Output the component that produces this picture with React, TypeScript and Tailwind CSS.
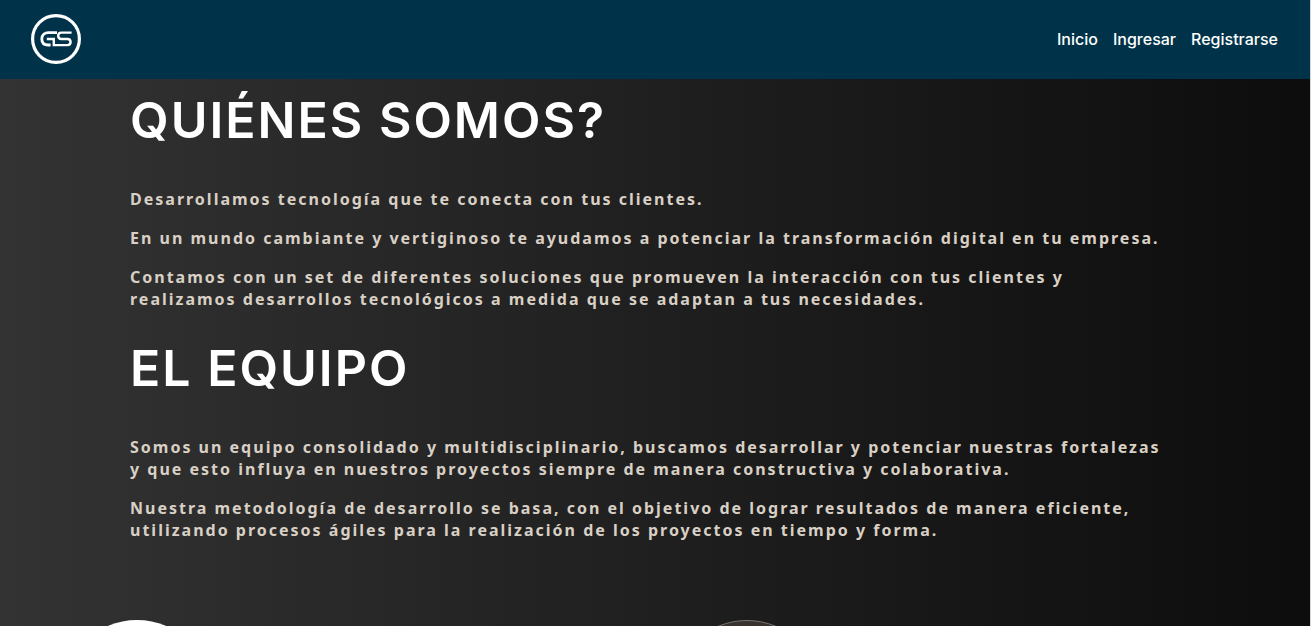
import type { ReactNode } from "react";

function Logo() {
  return (
    <svg viewBox="0 0 50 50" className="size-[50px]" fill="none" stroke="#fff" aria-hidden="true">
      <circle cx="25" cy="25" r="23.4" strokeWidth="3.2" />
      <g strokeWidth="2.4">
        <path d="M26 18.6H17.6C13.6 18.6 10.8 21.2 10.8 25C10.8 28.8 13.2 31 17.2 31H19.6" strokeWidth="2.8" />
        <path d="M15.8 25H22.8V31.1H36.4C38.6 31.1 39.6 30.1 39.6 28.1C39.6 26.1 38.6 25 36.4 25H30.4C28.2 25 27.2 23.8 27.2 21.8C27.2 19.7 28.2 18.6 30.4 18.6H40.6" />
      </g>
    </svg>
  );
}

const links = [
  { label: "Inicio", href: "#inicio" },
  { label: "Ingresar", href: "#ingresar" },
  { label: "Registrarse", href: "#registrarse" },
];

function Section({ title, children }: { title: string; children: ReactNode }) {
  return (
    <section>
      <h1 className="font-['Inter',sans-serif] text-[50px] leading-[60px] font-semibold tracking-[2px] text-white uppercase">
        {title}
      </h1>
      <div className="mt-[38px] flex flex-col gap-[17px] text-base leading-[22px] font-bold tracking-[2px] text-[#d9d0c5]">
        {children}
      </div>
    </section>
  );
}

export default function App() {
  return (
    <div className="h-screen overflow-hidden border-r border-[#d8d8d8] bg-linear-to-r from-[#333333] to-[#0d0d0d] font-['Noto_Sans',sans-serif]">
      <header className="flex h-[79px] items-center justify-between bg-[#003349] pr-8 pb-[2px] pl-[31px]">
        <a href="#inicio" aria-label="GS">
          <Logo />
        </a>
        <nav className="flex gap-[15px] font-['Inter',sans-serif] text-base font-medium text-white">
          {links.map((l) => (
            <a key={l.label} href={l.href}>
              {l.label}
            </a>
          ))}
        </nav>
      </header>
      <main>
        <div className="flex flex-col gap-7 pt-[11px] pr-[11%] pl-[130px]">
          <Section title="Quiénes somos?">
            <p>Desarrollamos tecnología que te conecta con tus clientes.</p>
            <p>En un mundo cambiante y vertiginoso te ayudamos a potenciar la transformación digital en tu empresa.</p>
            <p>
              Contamos con un set de diferentes soluciones que promueven la interacción con tus clientes y realizamos
              desarrollos tecnológicos a medida que se adaptan a tus necesidades.
            </p>
          </Section>
          <Section title="El equipo">
            <p>
              Somos un equipo consolidado y multidisciplinario, buscamos desarrollar y potenciar nuestras fortalezas y
              que esto influya en nuestros proyectos siempre de manera constructiva y colaborativa.
            </p>
            <p>
              Nuestra metodología de desarrollo se basa, con el objetivo de lograr resultados de manera eficiente,
              utilizando procesos ágiles para la realización de los proyectos en tiempo y forma.
            </p>
          </Section>
        </div>
        <div className="mt-[79px] grid grid-cols-[610px_1fr] pl-[62px]">
          <div className="size-[150px] rounded-full bg-white" />
          <div className="size-[150px] rounded-full border border-[#77736f] bg-[#38332f]" />
        </div>
      </main>
    </div>
  );
}
